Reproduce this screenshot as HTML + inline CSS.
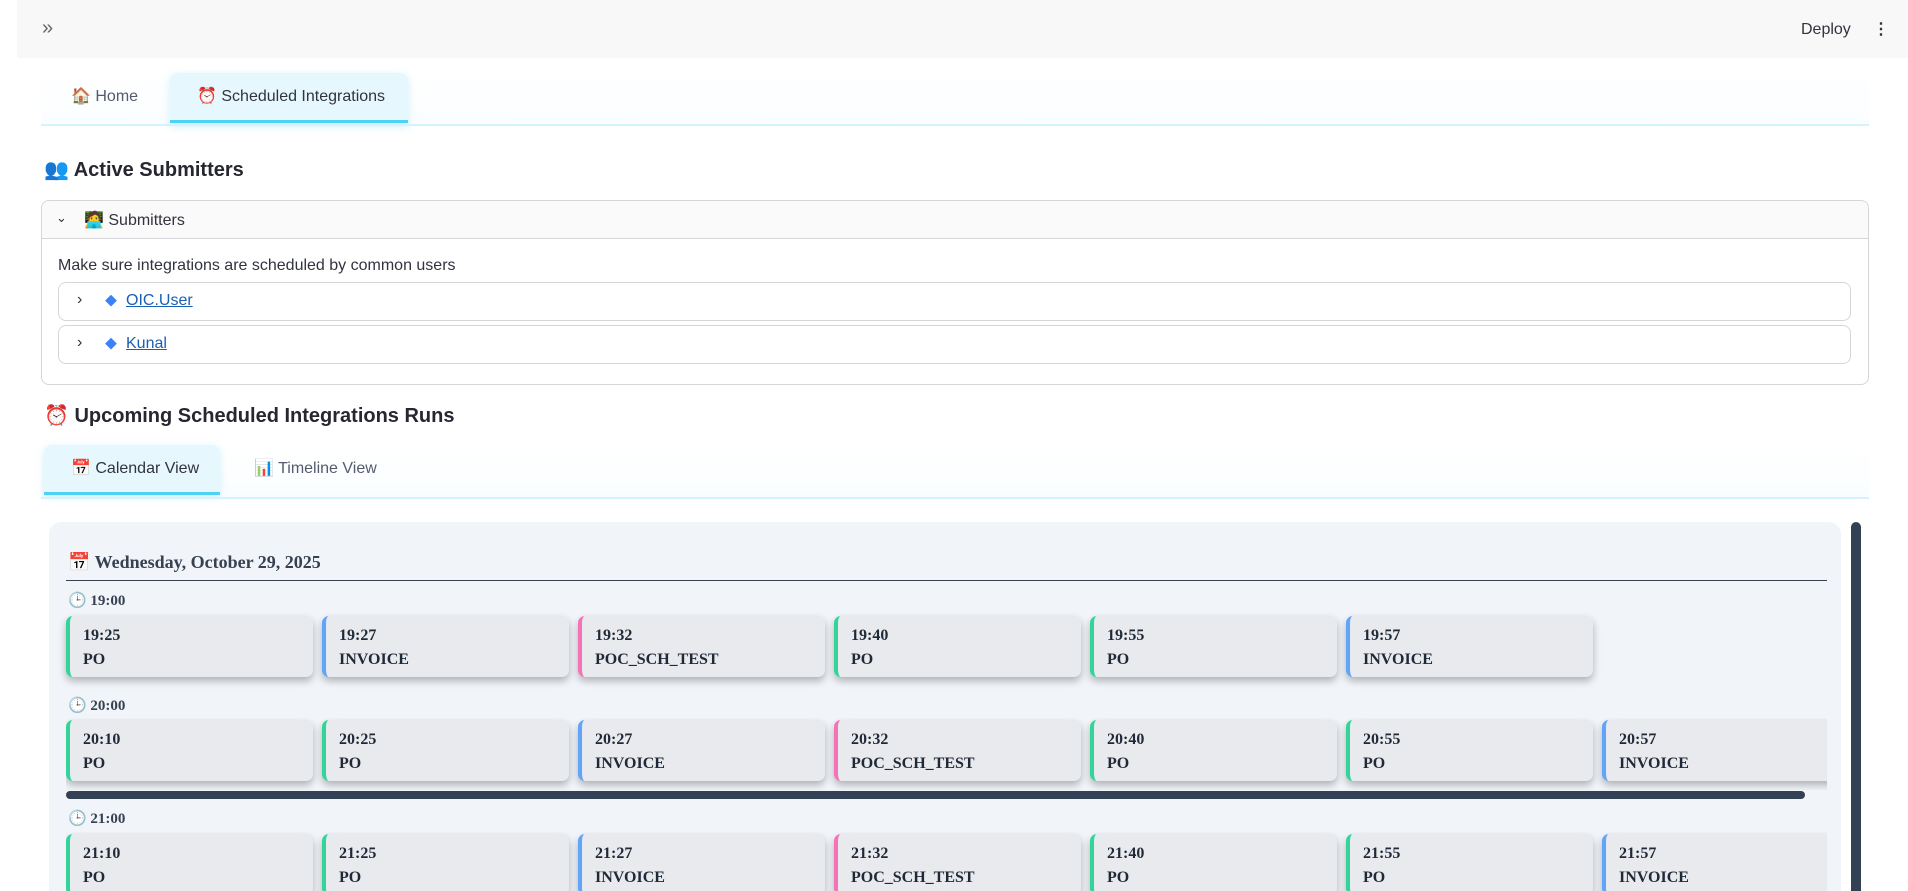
<!DOCTYPE html>
<html style="height:891px;overflow:hidden"><head><meta charset="utf-8">
<style>
*{box-sizing:border-box;margin:0;padding:0}
html,body{width:1908px;height:891px;overflow:hidden}
body{background:#fff;font-family:"Liberation Sans","Noto Sans CJK SC",sans-serif;color:#31333f;position:relative}
.abs{position:absolute}
.hdr{left:17px;top:0;width:1891px;height:58px;background:#f8f8f8}
.tab{position:absolute;font-size:16px;color:#555b6e;line-height:20px}
.card{position:absolute;width:247px;height:61px;background:#e9eaee;border-radius:7px;border-left:4px solid #34d399;box-shadow:0 4px 8px rgba(0,0,0,.28);font-family:"Liberation Serif",serif;font-weight:bold;font-size:16px;color:#1f2937;padding:8px 0 0 13px;line-height:24px}
.b{border-left-color:#60a5fa}.p{border-left-color:#f472b6}
.hr{font-family:"Liberation Serif",serif;font-weight:bold;font-size:15px;color:#374151;position:absolute}
.sub{position:absolute;left:58px;width:1793px;height:39px;border:1px solid #d6d6d9;border-radius:8px;font-size:16px}
.sub a{color:#1a5fb4;text-decoration:underline;position:absolute;left:67px;top:9px}
</style></head><body>
<div class="abs hdr"></div>
<div class="abs" style="left:42px;top:17px;font-size:20px;color:#666">»</div>
<div class="abs" style="left:1801px;top:21px;font-size:16px;color:#31333f">Deploy</div>
<div class="abs" style="left:1873px;top:19px;font-size:16px;font-weight:bold;color:#31333f">⋮</div>

<div class="abs" style="left:41px;top:70px;width:1828px;height:55px;background:linear-gradient(#fff,#fafdff)"></div>
<div class="abs" style="left:170px;top:73px;width:238px;height:52px;background:#e6f8fe;border-radius:8px 8px 0 0;box-shadow:0 2px 8px rgba(80,200,240,.25)"></div>
<div class="abs" style="left:170px;top:120px;width:238px;height:3px;background:#4dd2f5"></div>
<div class="abs" style="left:41px;top:124px;width:1828px;height:2px;background:#d3f4fc"></div>
<div class="tab" style="left:71px;top:87px">🏠 Home</div>
<div class="tab" style="left:197px;top:87px;color:#31333f">⏰ Scheduled Integrations</div>

<div class="abs" style="left:44px;top:157px;font-size:20px;font-weight:bold;color:#262730">👥 Active Submitters</div>

<div class="abs" style="left:41px;top:200px;width:1828px;height:185px;border:1px solid #d6d6d9;border-radius:8px"></div>
<div class="abs" style="left:42px;top:201px;width:1826px;height:38px;background:#fafafa;border-bottom:1px solid #d6d6d9;border-radius:8px 8px 0 0"></div>
<div class="abs" style="left:56px;top:210px;font-size:13px;color:#333">⌄</div>
<div class="abs" style="left:84px;top:210px;font-size:16px">🧑‍💻 Submitters</div>
<div class="abs" style="left:58px;top:257px;font-size:16px">Make sure integrations are scheduled by common users</div>
<div class="sub" style="top:282px"><span class="abs" style="left:18px;top:8px">›</span><span class="abs" style="left:46px;top:9px;color:#3b82f6;font-size:12px">◆</span><a>OIC.User</a></div>
<div class="sub" style="top:325px"><span class="abs" style="left:18px;top:8px">›</span><span class="abs" style="left:46px;top:9px;color:#3b82f6;font-size:12px">◆</span><a>Kunal</a></div>

<div class="abs" style="left:44px;top:403px;font-size:20px;font-weight:bold;color:#262730">⏰ Upcoming Scheduled Integrations Runs</div>

<div class="abs" style="left:41px;top:445px;width:1828px;height:53px;background:linear-gradient(#fff,#fafdff)"></div>
<div class="abs" style="left:44px;top:445px;width:176px;height:50px;background:#e6f8fe;border-radius:8px 8px 0 0;box-shadow:0 2px 8px rgba(80,200,240,.25)"></div>
<div class="abs" style="left:44px;top:492px;width:176px;height:3px;background:#4dd2f5"></div>
<div class="abs" style="left:41px;top:497px;width:1828px;height:2px;background:#d3f4fc"></div>
<div class="tab" style="left:71px;top:459px;color:#31333f">📅 Calendar View</div>
<div class="tab" style="left:254px;top:459px">📊 Timeline View</div>

<div class="abs" style="left:0;top:0;width:1908px;height:891px;overflow:hidden">
<div class="abs" style="left:49px;top:522px;width:1792px;height:400px;background:#f1f5f9;border-radius:12px"></div>
<div class="abs" style="left:1851px;top:522px;width:10px;height:400px;background:#334155;border-radius:5px"></div>
<div class="abs" style="left:68px;top:552px;font-family:'Liberation Serif',serif;font-weight:bold;font-size:18px;color:#374151">📅 Wednesday, October 29, 2025</div>
<div class="abs" style="left:66px;top:580px;width:1761px;height:1px;background:#374151"></div>

<div class="hr" style="left:68px;top:591px">🕒 19:00</div>
<div class="card" style="left:66px;top:616px">19:25<br>PO</div>
<div class="card b" style="left:322px;top:616px">19:27<br>INVOICE</div>
<div class="card p" style="left:578px;top:616px">19:32<br>POC_SCH_TEST</div>
<div class="card" style="left:834px;top:616px">19:40<br>PO</div>
<div class="card" style="left:1090px;top:616px">19:55<br>PO</div>
<div class="card b" style="left:1346px;top:616px">19:57<br>INVOICE</div>

<div class="hr" style="left:68px;top:696px">🕒 20:00</div>
<div class="abs" style="left:66px;top:718px;width:1761px;height:72px;overflow:hidden">
<div class="card" style="left:0;top:2px">20:10<br>PO</div>
<div class="card" style="left:256px;top:2px">20:25<br>PO</div>
<div class="card b" style="left:512px;top:2px">20:27<br>INVOICE</div>
<div class="card p" style="left:768px;top:2px">20:32<br>POC_SCH_TEST</div>
<div class="card" style="left:1024px;top:2px">20:40<br>PO</div>
<div class="card" style="left:1280px;top:2px">20:55<br>PO</div>
<div class="card b" style="left:1536px;top:2px">20:57<br>INVOICE</div>
</div>
<div class="abs" style="left:66px;top:791px;width:1739px;height:8px;background:#334155;border-radius:4px"></div>

<div class="hr" style="left:68px;top:809px">🕒 21:00</div>
<div class="abs" style="left:66px;top:832px;width:1761px;height:70px;overflow:hidden">
<div class="card" style="left:0;top:2px">21:10<br>PO</div>
<div class="card" style="left:256px;top:2px">21:25<br>PO</div>
<div class="card b" style="left:512px;top:2px">21:27<br>INVOICE</div>
<div class="card p" style="left:768px;top:2px">21:32<br>POC_SCH_TEST</div>
<div class="card" style="left:1024px;top:2px">21:40<br>PO</div>
<div class="card" style="left:1280px;top:2px">21:55<br>PO</div>
<div class="card b" style="left:1536px;top:2px">21:57<br>INVOICE</div>
</div>
</div>
</body></html>
